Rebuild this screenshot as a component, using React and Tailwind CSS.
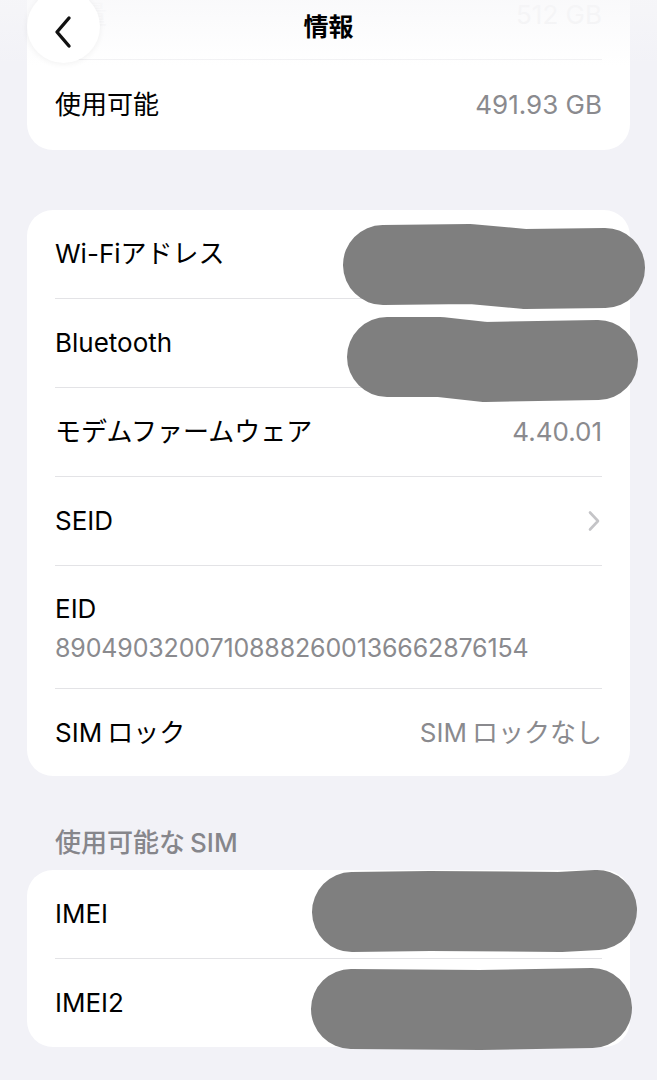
import React from "react";

const font = { fontFamily: 'Inter, "Noto Sans CJK JP", sans-serif' };

function Sep() {
  return <div className="h-px bg-[#e3e3e6]" />;
}

function Row({ label, value, chevron, h = "h-[88px]" }) {
  return (
    <div className={`flex items-center justify-between ${h}`}>
      <span className="text-[26px] leading-[30px] text-black">{label}</span>
      {value && <span className="text-[26px] leading-[30px] text-[#8a8a8e]">{value}</span>}
      {chevron && (
        <svg width="14" height="22" viewBox="0 0 14 22" className="mr-[1px]">
          <path d="M3 2.5 L11 11 L3 19.5" fill="none" stroke="#c4c4c7" strokeWidth="2.6" strokeLinecap="round" strokeLinejoin="round" />
        </svg>
      )}
    </div>
  );
}

export default function App() {
  return (
    <div className="relative w-[657px] h-[1080px] overflow-hidden bg-[#f2f2f7]" style={font}>
      <div className="flex flex-col">
        {/* Card 1 */}
        <div className="mt-[-30px] ml-[27px] w-[603px] rounded-[26px] bg-white px-[28px]">
          <div className="flex items-center justify-between h-[89px]">
            <span className="text-[26px] leading-[30px] text-[#f6f6f7]">容量</span>
            <span className="text-[26px] leading-[30px] text-[#f2f2f3]">512 GB</span>
          </div>
          <div className="h-px bg-[#f1f1f3]" />
          <div className="flex items-center justify-between h-[90px]">
            <span className="text-[26px] leading-[30px] text-black">使用可能</span>
            <span className="text-[26px] leading-[30px] text-[#8a8a8e]">491.93 GB</span>
          </div>
        </div>

        {/* Card 2 */}
        <div className="mt-[60px] ml-[27px] w-[603px] rounded-[26px] bg-white px-[28px]">
          <Row label="Wi-Fiアドレス" />
          <Sep />
          <Row label="Bluetooth" />
          <Sep />
          <Row label="モデムファームウェア" value="4.40.01" />
          <Sep />
          <Row label="SEID" chevron />
          <Sep />
          <div className="flex flex-col h-[122px] pt-[28px]">
            <span className="text-[26px] leading-[30px] text-black">EID</span>
            <span className="mt-[9px] text-[25px] leading-[30px] tracking-[-0.15px] text-[#8a8a8e]">89049032007108882600136662876154</span>
          </div>
          <Sep />
          <Row
            label={<>SIM<span className="ml-[5px]">ロック</span></>}
            value={<>SIM<span className="ml-[5px]">ロックなし</span></>}
            h="h-[87px]"
          />
        </div>

        {/* Section header */}
        <div className="pt-[52px] pb-[12px] pl-[55px]">
          <span className="block text-[26px] leading-[30px] font-medium text-[#86868b]">
            使用可能な<span className="ml-[5px]">SIM</span>
          </span>
        </div>

        {/* Card 3 */}
        <div className="ml-[27px] w-[603px] rounded-[26px] bg-white px-[28px]">
          <Row label="IMEI" />
          <Sep />
          <Row label="IMEI2" />
        </div>
      </div>

      {/* Nav bar overlay */}
      <div className="absolute inset-x-0 top-0 h-[66px] bg-gradient-to-b from-[#f7f7f9]/70 to-transparent pointer-events-none" />
      <div className="absolute left-[27px] top-[-10px] w-[73px] h-[73px] rounded-full bg-white shadow-[0_1px_6px_rgba(0,0,0,0.06)] flex items-center justify-center">
        <svg width="22" height="34" viewBox="0 0 22 34" className="mt-[10px] mr-[2px]">
          <path d="M17 3 L5 17 L17 31" fill="none" stroke="#111" strokeWidth="3.4" strokeLinecap="round" strokeLinejoin="round" />
        </svg>
      </div>
      <div className="absolute left-0 right-0 top-[12px] text-center text-[25px] leading-[30px] font-bold text-black">情報</div>

      {/* Redaction strokes */}
      <svg className="absolute inset-0 pointer-events-none" width="657" height="1080" viewBox="0 0 657 1080">
        <g fill="none" stroke="#7f7f7f" strokeWidth="80" strokeLinecap="round" strokeLinejoin="round">
          <path d="M383 265 L470 264 L525 269 L605 268" />
          <path d="M387 357 L440 357 L485 362 L598 360" />
          <path d="M352 912 L430 911 L560 912 L597 910" />
          <path d="M351 1009 L480 1010 L592 1008" />
        </g>
      </svg>
    </div>
  );
}
